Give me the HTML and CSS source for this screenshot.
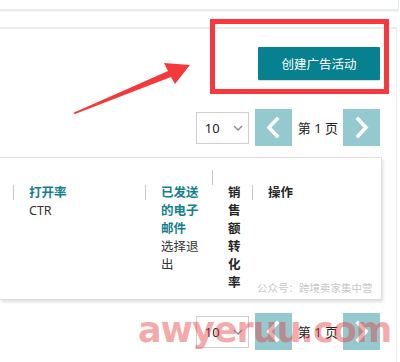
FILE: index.html
```html
<!DOCTYPE html>
<html lang="zh">
<head>
<meta charset="utf-8">
<link rel="stylesheet" href="styles.css">
</head>
<body>
<div class="top-panel"></div>
<div class="main">
  <div class="toolbar">
    <button class="create-btn">创建广告活动</button>
  </div>
  <div class="pager">
    <div class="select"><span>10</span><svg class="caret" width="10" height="6" viewBox="0 0 10 6"><path d="M1 1 L5 5 L9 1" fill="none" stroke="#8a8a8a" stroke-width="1.3"/></svg></div>
    <div class="pg-btn"><svg width="37" height="37" viewBox="0 0 37 37"><path d="M22 10 L14 18.5 L22 27" fill="none" stroke="#fff" stroke-width="3.6" stroke-linecap="square"/></svg></div>
    <span class="pg-text">第 1 页</span>
    <div class="pg-btn"><svg width="37" height="37" viewBox="0 0 37 37"><path d="M15 10 L23 18.5 L15 27" fill="none" stroke="#fff" stroke-width="3.6" stroke-linecap="square"/></svg></div>
  </div>
  <div class="card">
    <div class="head-row">
      <div class="col col-ctr"><span class="sep"></span><div class="label"><div class="teal">打开率</div><div class="plain">CTR</div></div></div>
      <div class="col col-sent"><span class="sep"></span><div class="label narrow"><div class="teal">已发送的电子邮件</div><div class="plain">选择退出</div></div></div>
      <div class="col col-conv"><span class="sep sep-up"></span><div class="label single"><div class="dark">销售额转化率</div></div></div>
      <div class="col col-op"><span class="sep"></span><div class="label"><div class="dark">操作</div></div></div>
    </div>
  </div>
  <div class="pager pager-bottom">
    <div class="select"><span>10</span><svg class="caret" width="10" height="6" viewBox="0 0 10 6"><path d="M1 1 L5 5 L9 1" fill="none" stroke="#8a8a8a" stroke-width="1.3"/></svg></div>
    <div class="pg-btn"><svg width="37" height="37" viewBox="0 0 37 37"><path d="M22 10 L14 18.5 L22 27" fill="none" stroke="#fff" stroke-width="3.6" stroke-linecap="square"/></svg></div>
    <span class="pg-text">第 1 页</span>
    <div class="pg-btn"><svg width="37" height="37" viewBox="0 0 37 37"><path d="M15 10 L23 18.5 L15 27" fill="none" stroke="#fff" stroke-width="3.6" stroke-linecap="square"/></svg></div>
  </div>
</div>

<div class="red-box"></div>
<svg class="arrow" width="400" height="362" viewBox="0 0 400 362"><polygon points="73,113 168,71 164,63 190,65 175,84 171,77 75,114" fill="#f5383a"/></svg>
<div class="wm-small">公众号：跨境卖家集中营</div>
<div class="wm-big">awyeruu.com</div>
</body>
</html>
```

FILE: styles.css
```css
* { box-sizing: border-box; }
html, body { margin: 0; padding: 0; }
body {
  width: 400px;
  height: 362px;
  overflow: hidden;
  position: relative;
  background: #ffffff;
  font-family: "Noto Sans", "Noto Sans CJK SC", sans-serif;
  color: #333;
}
.top-panel {
  width: 399px;
  height: 11px;
  border-bottom: 2px solid #e6ecec;
  border-right: 1px solid #e6ecec;
  box-shadow: 0 1px 1px rgba(0,0,0,0.03);
}
.main {
  margin-top: 16px;
  width: 397px;
  height: 335px;
  border-top: 2px solid #e8eded;
  border-right: 1px solid #e8eded;
  padding-right: 16px;
}
.toolbar {
  display: flex;
  justify-content: flex-end;
  padding-top: 18px;
}
.create-btn {
  width: 122px;
  height: 33px;
  border: none;
  border-radius: 1px;
  background: #07808f;
  color: #fff;
  font-family: "Noto Sans CJK SC", sans-serif;
  font-size: 12.5px;
  padding: 0;
  box-shadow: 0 1px 1px rgba(0,0,0,0.15);
}
.pager {
  display: flex;
  justify-content: flex-end;
  align-items: center;
  margin-top: 29px;
  height: 37px;
}
.pager-bottom { margin-top: 13px; }
.select {
  width: 53px;
  height: 32px;
  border: 1px solid #cfcfcf;
  display: flex;
  align-items: center;
  padding-left: 8px;
  font-size: 13px;
  color: #222;
  margin-right: 6px;
}
.select span { width: 28px; }
.caret { margin-top: 1px; }
.pg-btn {
  width: 37px;
  height: 37px;
  background: #94c9cf;
}
.pg-btn svg { display: block; }
.pg-text {
  font-size: 13px;
  color: #222;
  margin: 0 5px 0 6px;
}
.card {
  margin-top: 11px;
  height: 143px;
  width: 382px;
  border: 1px solid #dedede;
  border-left: none;
  box-shadow: 1px 2px 3px rgba(0,0,0,0.13);
  padding-top: 26px;
}
.head-row {
  display: flex;
  align-items: flex-start;
  font-size: 12.5px;
  line-height: 18px;
}
.col { display: flex; align-items: flex-start; flex: none; }
.sep {
  flex: none;
  width: 1px;
  height: 15px;
  margin-top: 1px;
  background: #c9c9c9;
}
.sep-up { margin-top: -14px; }
.label {
  margin-left: 15px;
  font-family: "Noto Sans", "Noto Sans CJK SC", sans-serif;
}
.col-ctr { margin-left: 13px; width: 132px; }
.col-sent { width: 67px; }
.col-conv { width: 40px; }
.narrow { width: 40px; }
.single { width: 13px; }
.teal { color: #137f8e; font-weight: 700; }
.dark { color: #262626; font-weight: 700; }
.plain { color: #333; }
.red-box {
  position: absolute;
  left: 210px;
  top: 19px;
  width: 179px;
  height: 75px;
  border: 5px solid #f8383c;
}
.arrow {
  position: absolute;
  left: 0;
  top: 0;
}
.wm-small {
  position: absolute;
  left: 257px;
  top: 281px;
  font-family: "Noto Sans CJK SC", sans-serif;
  font-size: 10.5px;
  line-height: 14px;
  color: #c8c8c8;
}
.wm-big {
  position: absolute;
  left: 138px;
  top: 313px;
  font-family: "DejaVu Sans", sans-serif;
  font-weight: 700;
  font-size: 35px;
  line-height: 35px;
  letter-spacing: -1px;
  color: rgba(236, 60, 60, 0.45);
  white-space: nowrap;
}
```
